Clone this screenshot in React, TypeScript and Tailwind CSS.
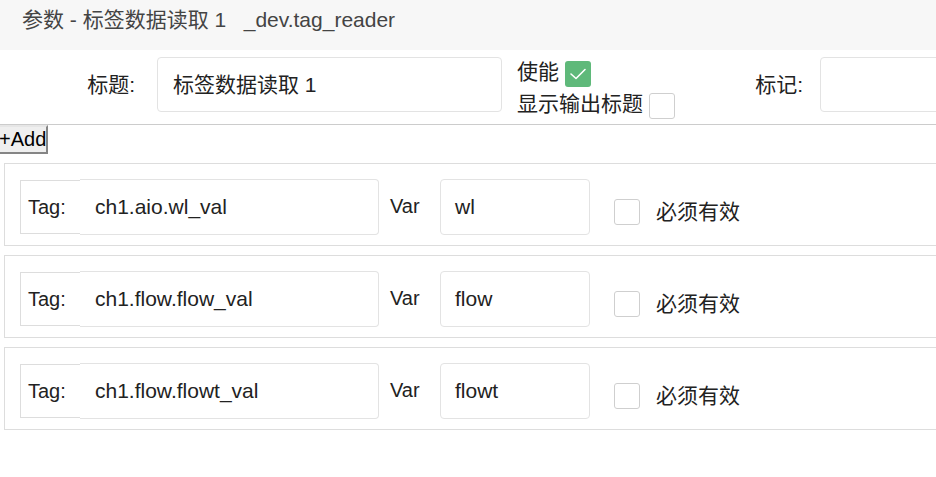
import React from "react";

const rows = [
  { tag: "ch1.aio.wl_val", v: "wl" },
  { tag: "ch1.flow.flow_val", v: "flow" },
  { tag: "ch1.flow.flowt_val", v: "flowt" },
];

function Check({ checked }: { checked?: boolean }) {
  if (checked) {
    return (
      <div className="w-[26px] h-[26px] rounded-[3px] bg-[#5fb97a] flex items-center justify-center shrink-0">
        <svg width="18" height="14" viewBox="0 0 18 14" fill="none">
          <path d="M2 7 L7 11.5 L16 2.5" stroke="white" strokeWidth="1.6" strokeLinecap="round" strokeLinejoin="round" />
        </svg>
      </div>
    );
  }
  return <div className="w-[26px] h-[26px] rounded-[3px] border border-[#cfcfcf] bg-white shrink-0" />;
}

export default function App() {
  return (
    <div
      className="w-[936px] h-[477px] overflow-hidden bg-white text-[#222]"
      style={{ fontFamily: '"Liberation Sans", "Noto Sans CJK SC", sans-serif' }}
    >
      <div className="h-[50px] bg-[#f7f7f7] pl-[22px] pt-[5px] leading-[30px] text-[21px] text-[#444] whitespace-pre">
        参数 - 标签数据读取 1{"   "}_dev.tag_reader
      </div>
      <div className="w-[1200px] h-[75px] flex items-start pt-[7px] border-b border-[#cccccc] text-[21px]">
        <div className="w-[157px] h-[55px] flex items-center justify-end pr-[22px]">标题:</div>
        <div className="w-[345px] h-[55px] border border-[#e3e3e3] rounded-[4px] px-[15px] flex items-center">
          标签数据读取 1
        </div>
        <div className="ml-[15px] flex flex-col gap-[2px]">
          <div className="h-[30px] flex items-center gap-[6px]">
            <span>使能</span>
            <div className="mt-[4px]"><Check checked /></div>
          </div>
          <div className="h-[30px] flex items-center gap-[6px]">
            <span>显示输出标题</span>
            <div className="mt-[4px]"><Check /></div>
          </div>
        </div>
        <div className="w-[145px] h-[55px] flex items-center justify-end pr-[17px]">标记:</div>
        <div className="w-[300px] h-[55px] border border-[#e3e3e3] rounded-[4px]" />
      </div>
      <button className="ml-[-3px] block bg-[#efefef] border-2 border-solid border-t-[#e6e6e6] border-l-[#e6e6e6] border-r-[#858585] border-b-[#858585] text-[20px] leading-[23px] py-[1px] px-0 text-black">
        +Add
      </button>
      <div className="flex flex-col gap-[9px] mt-[9px]">
        {rows.map((r) => (
          <div key={r.tag} className="ml-[4px] w-[1100px] border border-[#dddddd] pt-[15px] pb-[10px] pl-[15px] flex items-center">
            <div className="w-[60px] h-[54px] border-y border-l border-[#dddddd] pl-[7px] flex items-center text-[20px]">Tag:</div>
            <div className="w-[299px] h-[56px] border border-l-0 border-[#e3e3e3] rounded-r-[4px] px-[15px] flex items-center text-[21px]">{r.tag}</div>
            <div className="w-[61px] pl-[11px] text-[20px] mt-[-2px]">Var</div>
            <div className="w-[150px] h-[56px] border border-[#e3e3e3] rounded-[4px] px-[14px] flex items-center text-[21px]">{r.v}</div>
            <div className="ml-[24px] mt-[10px] flex items-center gap-[16px] text-[21px]">
              <Check />
              <span>必须有效</span>
            </div>
          </div>
        ))}
      </div>
    </div>
  );
}
